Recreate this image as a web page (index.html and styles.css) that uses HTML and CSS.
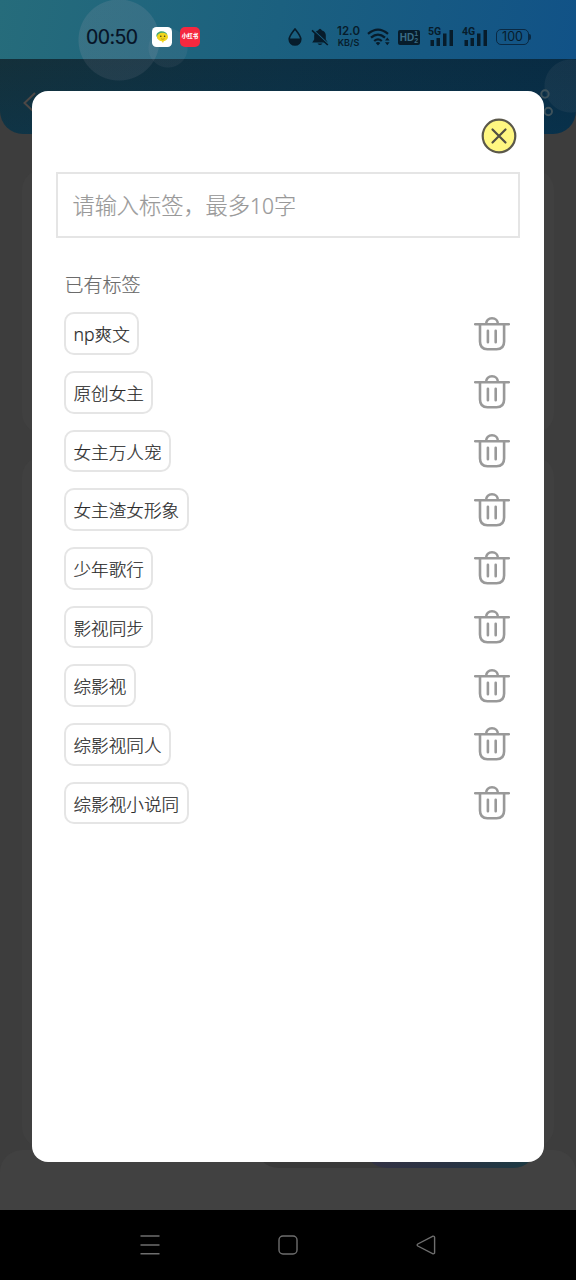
FILE: index.html
```html
<!DOCTYPE html>
<html lang="zh-CN">
<head>
<meta charset="utf-8">
<title>标签</title>
<link rel="stylesheet" href="styles.css">
</head>
<body>
<svg class="sprite" aria-hidden="true">
  <symbol id="trash" viewBox="0 0 36 34"><path d="M1.2 7.2H34.8M6 7.5V24.5Q6 32.3 13.5 32.3H22.5Q30.1 32.3 30.1 24.5V7.5M12.1 7C12.1 3.5 14.5 1.3 18 1.3S23.9 3.5 23.9 7M13.9 13.8V25.2M21.7 13.8V25.2" fill="none" stroke="#999" stroke-width="2.6" stroke-linecap="round"/></symbol>
</svg>
<div class="screen">
  <div class="backdrop">
    <div class="hero"></div>
    <div class="panel panel-top"></div>
    <div class="panel panel-main"></div>
    <div class="dock"><div class="dock-button"></div></div>
    <svg class="back" width="16" height="24" viewBox="0 0 16 24"><path d="M13 2L2.5 12L13 22" fill="none" stroke="#4d4846" stroke-width="2"/></svg>
    <svg class="share" width="20" height="30" viewBox="0 0 20 30"><g fill="none" stroke="#3e525b" stroke-width="2"><circle cx="9" cy="6" r="3.7"/><circle cx="12.3" cy="23.5" r="3.7"/></g></svg>
  </div>

  <header class="status">
    <span class="clock">00:50</span>
    <svg class="app-icon" width="20" height="20" viewBox="0 0 20 20"><rect width="20" height="20" rx="4.5" fill="#fff"/><path d="M4.3 9C4.5 3 14.2 3 15.4 8L12 12H6Z" fill="#48a878"/><ellipse cx="10.5" cy="10" rx="5.5" ry="4.2" fill="#f1d51d"/><path d="M9 13L11 16L12.2 13" fill="#f1d51d"/><circle cx="8.8" cy="9.3" r=".8" fill="#443a17"/><circle cx="12.6" cy="9.3" r=".8" fill="#443a17"/><path d="M9 11.7Q10.7 13 12.5 11.7" fill="none" stroke="#a78319" stroke-width=".7"/></svg>
    <span class="red-app">小红书</span>
    <div class="indicators">
      <svg class="drop" width="14" height="18" viewBox="0 0 14 18"><path d="M7 1C4 5 1.2 8 1.2 11.3A5.8 5.7 0 0 0 12.8 11.3C12.8 8 10 5 7 1Z" fill="none" stroke="#071c2b" stroke-width="1.6"/><path d="M1.2 10.5H12.8C13 19 1 19 1.2 10.5Z" fill="#071c2b"/></svg>
      <svg class="bell" width="18" height="18" viewBox="0 0 18 18"><path d="M1.2 14.5L3.2 11.5V7Q4 3.4 7 2.5Q9-.8 11 2.5Q14.2 3.4 14.8 7V11.5L16.8 14.5ZM6.5 15.5H11.5Q9 18.6 6.5 15.5Z" fill="#071c2b"/><path d="M2 1.7L18 16.5" stroke="#1a5d7e" stroke-width="1.2"/><path d="M1 2.3L16.8 17" stroke="#071c2b" stroke-width="1.6"/></svg>
      <span class="speed"><b>12.0</b><i>KB/S</i></span>
      <svg class="wifi" width="24" height="18" viewBox="0 0 24 18"><g fill="none" stroke="#071c2b" stroke-width="2.3"><path d="M1 5.8Q11 -2.6 21 5.8M4 9.7Q11 3.6 18 9.7M7.2 13Q11 9.7 14.8 13"/></g><path d="M8.7 15L11 17.5L13.3 15Q11 13.2 8.7 15ZM18 12.5L20.3 9.5L22.6 12.5ZM18 14.2H22.6L20.3 17.2Z" fill="#071c2b"/></svg>
      <span class="hd">HD<span class="hd-num"><i>1</i><i>2</i></span></span>
      <span class="signal"><svg width="26" height="17" viewBox="0 0 26 17"><path d="M2.5 11H6V17H2.5ZM8.5 9H12V17H8.5ZM15 4.5H18.5V17H15ZM21.5 1H25V17H21.5Z" fill="#071c2b"/></svg><b class="net">5G</b></span>
      <span class="signal"><svg width="26" height="17" viewBox="0 0 26 17"><path d="M2.5 11H6V17H2.5ZM8.5 9H12V17H8.5ZM15 4.5H18.5V17H15ZM21.5 1H25V17H21.5Z" fill="#071c2b"/></svg><b class="net">4G</b></span>
      <span class="battery">100</span>
    </div>
  </header>

  <main class="stage">
    <section class="dialog">
      <div class="dialog-head">
        <svg width="36" height="36" viewBox="0 0 36 36"><circle cx="18" cy="18" r="16.3" fill="#fff781" stroke="#5b584a" stroke-width="2.2"/><path d="M11.5 11.5L24.5 24.5M24.5 11.5L11.5 24.5" stroke="#514f43" stroke-width="2.2" stroke-linecap="round"/></svg>
      </div>
      <div class="field">请输入标签，最多<span class="latin">10</span>字</div>
      <h2 class="heading">已有标签</h2>
      <ul class="tags">
        <li class="row"><span class="tag"><span class="latin">np</span>爽文</span><svg class="trash"><use href="#trash"/></svg></li>
        <li class="row"><span class="tag">原创女主</span><svg class="trash"><use href="#trash"/></svg></li>
        <li class="row"><span class="tag">女主万人宠</span><svg class="trash"><use href="#trash"/></svg></li>
        <li class="row"><span class="tag">女主渣女形象</span><svg class="trash"><use href="#trash"/></svg></li>
        <li class="row"><span class="tag">少年歌行</span><svg class="trash"><use href="#trash"/></svg></li>
        <li class="row"><span class="tag">影视同步</span><svg class="trash"><use href="#trash"/></svg></li>
        <li class="row"><span class="tag">综影视</span><svg class="trash"><use href="#trash"/></svg></li>
        <li class="row"><span class="tag">综影视同人</span><svg class="trash"><use href="#trash"/></svg></li>
        <li class="row"><span class="tag">综影视小说同</span><svg class="trash"><use href="#trash"/></svg></li>
      </ul>
    </section>
  </main>

  <nav class="navbar">
    <svg width="20" height="20" viewBox="0 0 20 20"><path d="M.5 1H19.5M.5 10H19.5M.5 18.8H19.5" stroke="#6e6e6e" stroke-width="1.4"/></svg>
    <svg width="20" height="20" viewBox="0 0 20 20"><rect x="1" y="1" width="18" height="18" rx="4" fill="none" stroke="#6e6e6e" stroke-width="1.4"/></svg>
    <svg width="20" height="20" viewBox="0 0 20 20"><path d="M17 1.2L1.8 9Q.5 10 1.8 11L17 18.8Q18.6 19 18.6 17.5V2.5Q18.6 1 17 1.2Z" fill="none" stroke="#6e6e6e" stroke-width="1.4"/></svg>
  </nav>
</div>
</body>
</html>
```
FILE: styles.css
```css
* { box-sizing: border-box; }
body { margin: 0; font-family: "Noto Sans CJK SC", "Noto Sans", sans-serif; }
i { font-style: normal; }
.sprite { position: absolute; width: 0; height: 0; }
.screen { position: relative; width: 576px; height: 1280px; display: flex; flex-direction: column; overflow: hidden; background: #3d3d3d; }

/* dimmed page behind the dialog */
.backdrop { position: absolute; inset: 0; }
.hero {
  height: 134px; border-radius: 0 0 23px 23px;
  background:
    radial-gradient(circle at 571px 86px, rgba(70, 90, 105, .2) 26px, transparent 27px),
    radial-gradient(circle at 119px 40px, rgba(120, 125, 140, .17) 40px, transparent 41px),
    radial-gradient(circle at 168px 48px, rgba(120, 125, 140, .12) 19px, transparent 20px),
    linear-gradient(180deg, transparent 59px, rgba(8, 60, 90, .35) 134px),
    linear-gradient(100deg, #14303a, #0d2f42 50%, #082b43);
}
.panel { position: absolute; left: 22px; right: 22px; border-radius: 20px; background: #404040; }
.panel-top { top: 170px; height: 263px; }
.panel-main { top: 457px; height: 690px; }
.dock { position: absolute; left: 0; right: 0; top: 1150px; height: 60px; border-radius: 22px 22px 0 0; background: #414141; }
.dock-button { position: absolute; left: 255px; top: -30px; width: 282px; height: 48px; border-radius: 24px; background: #393939; }
.dock-button::after { content: ""; position: absolute; left: 108px; right: 0; top: 0; bottom: 0; border-radius: 24px; background: linear-gradient(90deg, #333244, #293243 50%, #1b3a43); }
.back { position: absolute; left: 22px; top: 91px; }
.share { position: absolute; left: 536px; top: 88px; }

.status {
  position: relative; flex: none; height: 59px; padding: 15px 44px 0 86px; display: flex; align-items: center;
  background:
    radial-gradient(circle at 119px 40px, rgba(150, 155, 170, .19) 40px, transparent 41px),
    radial-gradient(circle at 168px 48px, rgba(150, 155, 170, .11) 19px, transparent 20px),
    linear-gradient(100deg, #266c7b, #1b607f 48%, #115287);
  color: #071c2b;
}
.clock { width: 66px; font: 400 19.5px/24px Inter, sans-serif; letter-spacing: -.6px; color: #061326; white-space: nowrap; -webkit-text-stroke: .2px #061326; }
.red-app { margin-left: 8px; width: 20px; height: 20px; border-radius: 5px; background: #f5283f; color: #fff; font-size: 5.5px; font-weight: 900; line-height: 19px; text-align: center; white-space: nowrap; }
.indicators { margin-left: auto; margin-right: 3px; display: flex; align-items: center; }
.bell { margin-left: 9px; }
.speed { margin-left: 7px; width: 25px; display: flex; flex-direction: column; align-items: center; font-family: Inter, sans-serif; }
.speed b { font-size: 11.5px; font-weight: 600; line-height: 11px; }
.speed i { font-size: 9px; font-weight: 600; line-height: 11px; }
.wifi { margin-left: 6px; }
.hd { margin-left: 7px; width: 22px; height: 15px; border-radius: 2px; display: flex; align-items: center; justify-content: center; background: #071c2b; color: #3a6c86; font: 600 10px/15px "Liberation Sans", sans-serif; }
.hd-num { display: flex; flex-direction: column; font-size: 7px; line-height: 7px; }
.signal { position: relative; display: flex; margin-left: 8px; }
.net { position: absolute; left: 0; top: -3px; font: 700 10.5px/11px Roboto, sans-serif; }
.battery { position: relative; margin-left: 8px; width: 33px; height: 16px; border: 1.5px solid #0a2943; border-radius: 5px; font: 400 12.5px/14px Inter, sans-serif; text-align: center; }
.battery::after { content: ""; position: absolute; left: 32px; top: 4px; width: 2px; height: 6px; border-radius: 0 2px 2px 0; background: #0a2943; }

.stage { position: relative; flex: 1; padding: 32px 32px 48.5px; display: flex; }
.dialog { flex: 1; padding: 27px 24px 0; border-radius: 16px; background: #fff; }
.dialog-head { display: flex; justify-content: flex-end; height: 54px; padding-right: 3px; }
.field, .heading, .tag { font-weight: 300; -webkit-text-stroke: .2px currentColor; }
.latin { font-family: "Noto Sans", sans-serif; font-weight: 300; line-height: 1; }
.field { height: 66px; border: 2px solid #e5e5e5; padding: 0 14.5px; font-size: 22.2px; line-height: 60px; color: #999; }
.field .latin { font-size: 21px; }
.heading { margin: 31px 0 0; padding-left: 8.5px; font-size: 19px; line-height: 30px; color: #6b6b6b; }
.tags { list-style: none; margin: 13.4px 0 0; padding: 0 10px 0 8px; display: flex; flex-direction: column; gap: 16px; }
.row { height: 42.67px; display: flex; align-items: center; justify-content: space-between; }
.tag { height: 42.67px; padding: 0 7.5px; border: 2px solid #e5e5e5; border-radius: 10px; font-size: 17.6px; line-height: 39.6px; color: #2a2a2a; white-space: nowrap; }
.trash { width: 36px; height: 34px; }

.navbar { position: relative; flex: none; height: 70px; padding: 0 140px; display: flex; align-items: center; justify-content: space-between; background: #000; }
```
